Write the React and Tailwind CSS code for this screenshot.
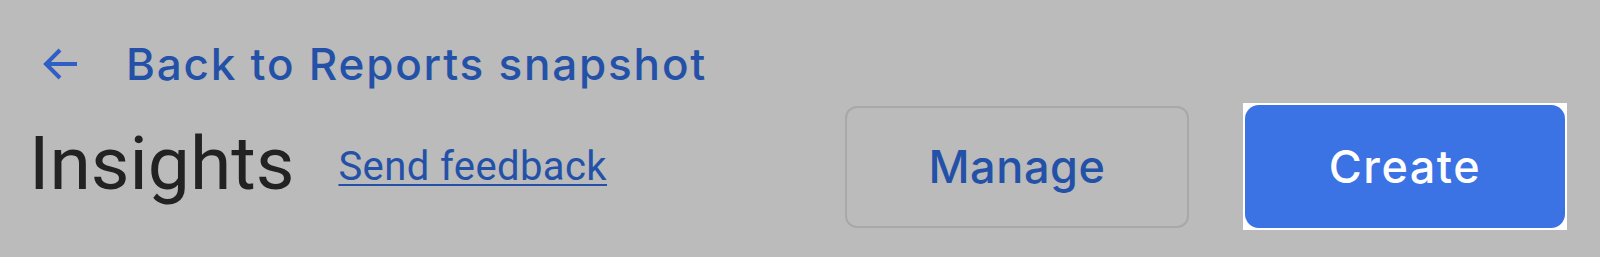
import React from "react";

export default function App() {
  return (
    <div className="w-[1600px] h-[257px] bg-[#babbba] font-['Roboto',sans-serif] overflow-hidden">
      <div className="flex items-center h-[62px] mt-[33px] pl-[37px]">
        <svg width="48" height="48" viewBox="0 0 24 24" className="text-[#2f5fc4]">
          <path d="M20 12H5M11.5 5l-7 7 7 7" fill="none" stroke="currentColor" strokeWidth="2" />
        </svg>
        <span className="ml-[41px] font-['Inter',sans-serif] text-[44px] font-medium text-[#2451a8] tracking-[1.8px] leading-none">
          Back to Reports snapshot
        </span>
      </div>
      <div className="flex items-center justify-between pl-[29px] pr-[33px] mt-[8px]">
        <div className="flex items-center">
          <h1 className="text-[75px] text-[#222222] leading-none pb-[6px]">Insights</h1>
          <a className="ml-[44px] text-[40px] text-[#2451a8] underline decoration-2 underline-offset-[4px] tracking-[0.4px] leading-none">
            Send feedback
          </a>
        </div>
        <div className="flex items-center gap-[54px]">
          <button className="w-[344px] h-[122px] border-2 border-[#a6a8aa] rounded-xl font-['Inter',sans-serif] text-[45px] font-medium text-[#2451a8] tracking-[0.6px]">
            Manage
          </button>
          <div className="w-[324px] h-[127px] bg-white p-[2px]">
            <button className="w-full h-full rounded-[14px] bg-[#3b72e4] font-['Inter',sans-serif] text-[45px] font-medium text-white tracking-[1.5px]">
              Create
            </button>
          </div>
        </div>
      </div>
    </div>
  );
}
